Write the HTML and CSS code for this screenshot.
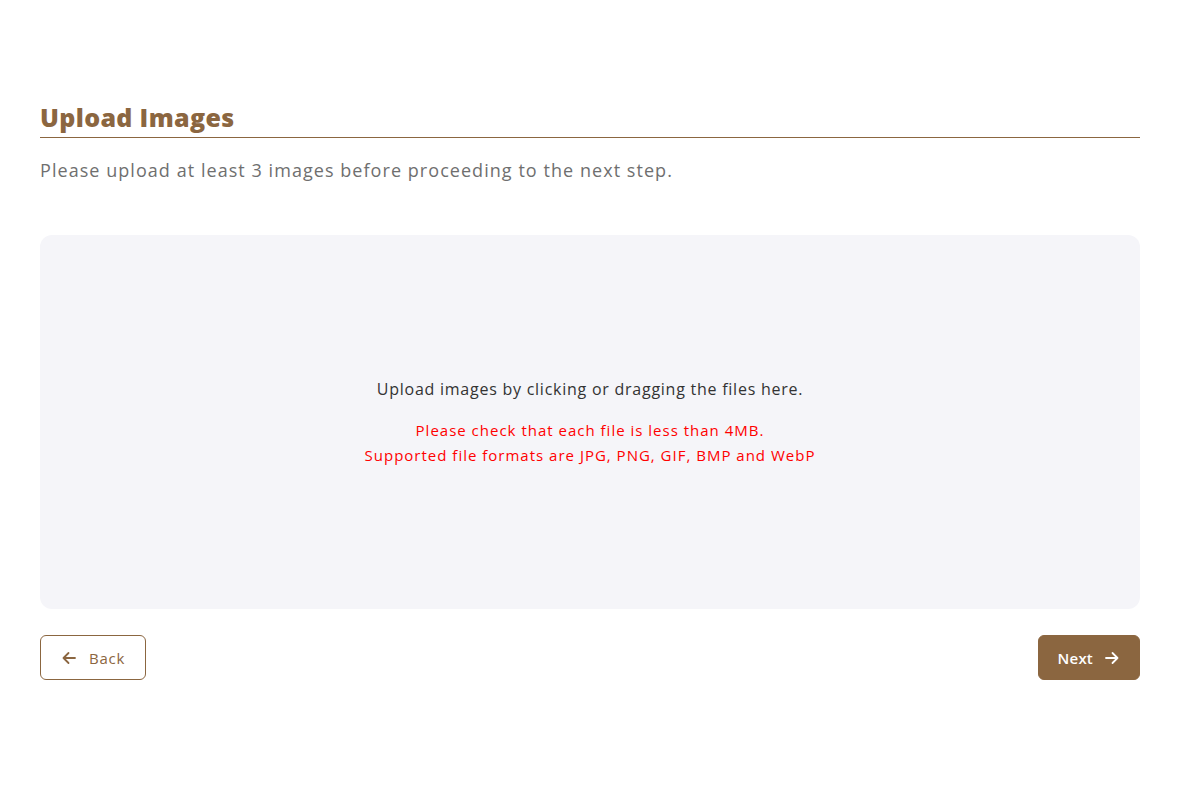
FILE: index.html
```html
<!DOCTYPE html>
<html lang="en">
<head>
<meta charset="utf-8">
<title>Upload Images</title>
<link rel="stylesheet" href="styles.css">
</head>
<body>
<main class="page">
  <h1 class="title">Upload Images</h1>
  <p class="subtitle">Please upload at least 3 images before proceeding to the next step.</p>
  <section class="dropzone">
    <p class="drop-main">Upload images by clicking or dragging the files here.</p>
    <p class="drop-note">Please check that each file is less than 4MB.<br>Supported file formats are JPG, PNG, GIF, BMP and WebP</p>
  </section>
  <div class="actions">
    <button class="btn btn-back" type="button">
      <svg class="ico" viewBox="0 0 16 16" width="16" height="16" aria-hidden="true"><path d="M14 8H2.5M7.5 3L2.5 8l5 5" fill="none" stroke="currentColor" stroke-width="1.8" stroke-linecap="round" stroke-linejoin="round"/></svg>
      <span>Back</span>
    </button>
    <button class="btn btn-next" type="button">
      <span>Next</span>
      <svg class="ico" viewBox="0 0 16 16" width="16" height="16" aria-hidden="true"><path d="M2 8h11.5M8.5 3l5 5-5 5" fill="none" stroke="currentColor" stroke-width="1.8" stroke-linecap="round" stroke-linejoin="round"/></svg>
    </button>
  </div>
</main>
</body>
</html>
```
FILE: styles.css
```css
* { box-sizing: border-box; }
html, body { margin: 0; padding: 0; background: #ffffff; }
body { font-family: "Open Sans", "Noto Sans", sans-serif; color: #333; }
.page { padding: 100px 40px 0; width: 1180px; }
.title {
  margin: 0;
  font-size: 25px;
  line-height: 35px;
  font-weight: 800;
  letter-spacing: 0.35px;
  color: #8b6640;
  padding-bottom: 2px;
  border-bottom: 1px solid #8b6640;
  width: 1100px;
}
.subtitle {
  margin: 18px 0 0;
  font-size: 18px;
  line-height: 28px;
  letter-spacing: 1.05px;
  color: #6f6f6f;
}
.dropzone {
  margin-top: 51px;
  width: 1100px;
  height: 374px;
  background: #f5f5f9;
  border-radius: 12px;
  display: flex;
  flex-direction: column;
  align-items: center;
  justify-content: center;
  text-align: center;
}
.drop-main { margin: 0; font-size: 16px; line-height: 24px; letter-spacing: 0.75px; color: #333; }
.drop-note { margin: 17px 0 0; font-size: 15px; line-height: 25px; letter-spacing: 1px; color: #ff0000; }
.actions {
  margin-top: 26px;
  width: 1100px;
  display: flex;
  justify-content: space-between;
}
.btn {
  height: 45px;
  display: inline-flex;
  align-items: center;
  gap: 12px;
  font-family: inherit;
  font-size: 15px;
  font-weight: 500;
  letter-spacing: 0.8px;
  border-radius: 6px;
  cursor: pointer;
}
.btn-back {
  padding: 0 20px 0 20px;
  background: #fff;
  color: #8b6640;
  border: 1px solid #8b6640;
}
.btn-next {
  padding: 0 19px;
  background: #8b6640;
  color: #fff;
  border: 1px solid #8b6640;
  font-weight: 600;
  letter-spacing: 0.2px;
  gap: 11px;
}
.ico { display: block; }
```
